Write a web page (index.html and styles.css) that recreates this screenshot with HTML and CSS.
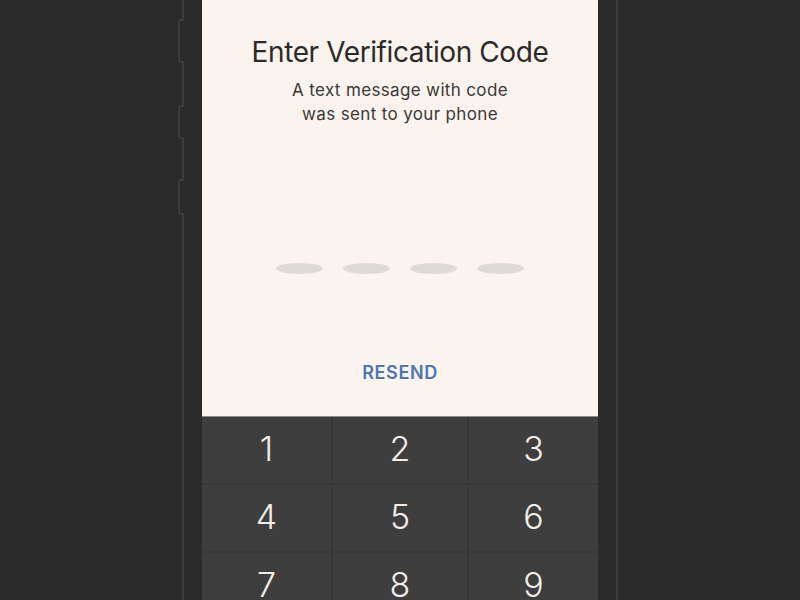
FILE: index.html
```html
<!DOCTYPE html>
<html>
<head>
<meta charset="utf-8">
<link rel="stylesheet" href="styles.css">
</head>
<body>
<div class="device">
  <span class="side-btn btn-a"></span>
  <span class="side-btn btn-b"></span>
  <span class="side-btn btn-c"></span>
  <div class="screen">
    <div class="content">
      <h1 class="title">Enter Verification Code</h1>
      <p class="subtitle">A text message with code<br>was sent to your phone</p>
      <div class="dots">
        <span class="dot"></span><span class="dot"></span><span class="dot"></span><span class="dot"></span>
      </div>
      <div class="resend">RESEND</div>
    </div>
    <div class="keypad">
      <div class="key">1</div><div class="key">2</div><div class="key">3</div>
      <div class="key">4</div><div class="key">5</div><div class="key">6</div>
      <div class="key">7</div><div class="key">8</div><div class="key">9</div>
    </div>
  </div>
</div>
</body>
</html>
```

FILE: styles.css
```css
html, body {
  margin: 0;
  padding: 0;
  background: #2a2a2a;
  height: 600px;
  overflow: hidden;
}
.device {
  position: relative;
  width: 396px;
  height: 600px;
  margin: 0 auto;
  padding: 0 18px;
  border-left: 2px solid #3c3c3c;
  border-right: 2px solid #3c3c3c;
}
.side-btn {
  position: absolute;
  left: -6px;
  width: 4px;
  background: #2a2a2a;
  border: 2px solid #3c3c3c;
  border-right: 0;
  border-radius: 3px 0 0 3px;
  z-index: 2;
}
.btn-a { top: 19px; height: 40px; }
.btn-b { top: 105px; height: 30px; }
.btn-c { top: 179px; height: 32px; }
.screen {
  width: 396px;
  height: 600px;
  display: flex;
  flex-direction: column;
  background: #fbf4ee;
}
.content {
  height: 416px;
  flex-shrink: 0;
  display: flex;
  flex-direction: column;
  align-items: center;
  font-family: Inter, "Liberation Sans", sans-serif;
}
.title {
  margin: 35px 0 0;
  font-size: 28px;
  line-height: 34px;
  font-weight: 400;
  color: #2b2a28;
  letter-spacing: -0.4px;
}
.subtitle {
  margin: 9px 0 0;
  font-size: 17px;
  line-height: 24px;
  text-align: center;
  color: #3a3936;
  letter-spacing: 0.35px;
}
.dots {
  margin-top: 137px;
  display: flex;
  gap: 20px;
}
.dot {
  width: 47px;
  height: 11px;
  border-radius: 50%;
  background: #dedad5;
}
.resend {
  margin-top: 89px;
  font-size: 18px;
  line-height: 20px;
  font-weight: 600;
  color: #4a77b0;
  letter-spacing: 0.6px;
}
.keypad {
  flex: 1;
  display: grid;
  grid-template-columns: 129px 1fr 129px;
  grid-auto-rows: 66px;
  gap: 2px;
  background: #383838;
  border-top: 1px solid #8d8a87;
}
.key {
  background: #3e3e3e;
  color: #f2ede6;
  font-family: Inter, "Liberation Sans", sans-serif;
  font-weight: 300;
  font-size: 34px;
  padding-bottom: 3px;
  display: flex;
  align-items: center;
  justify-content: center;
}
```
